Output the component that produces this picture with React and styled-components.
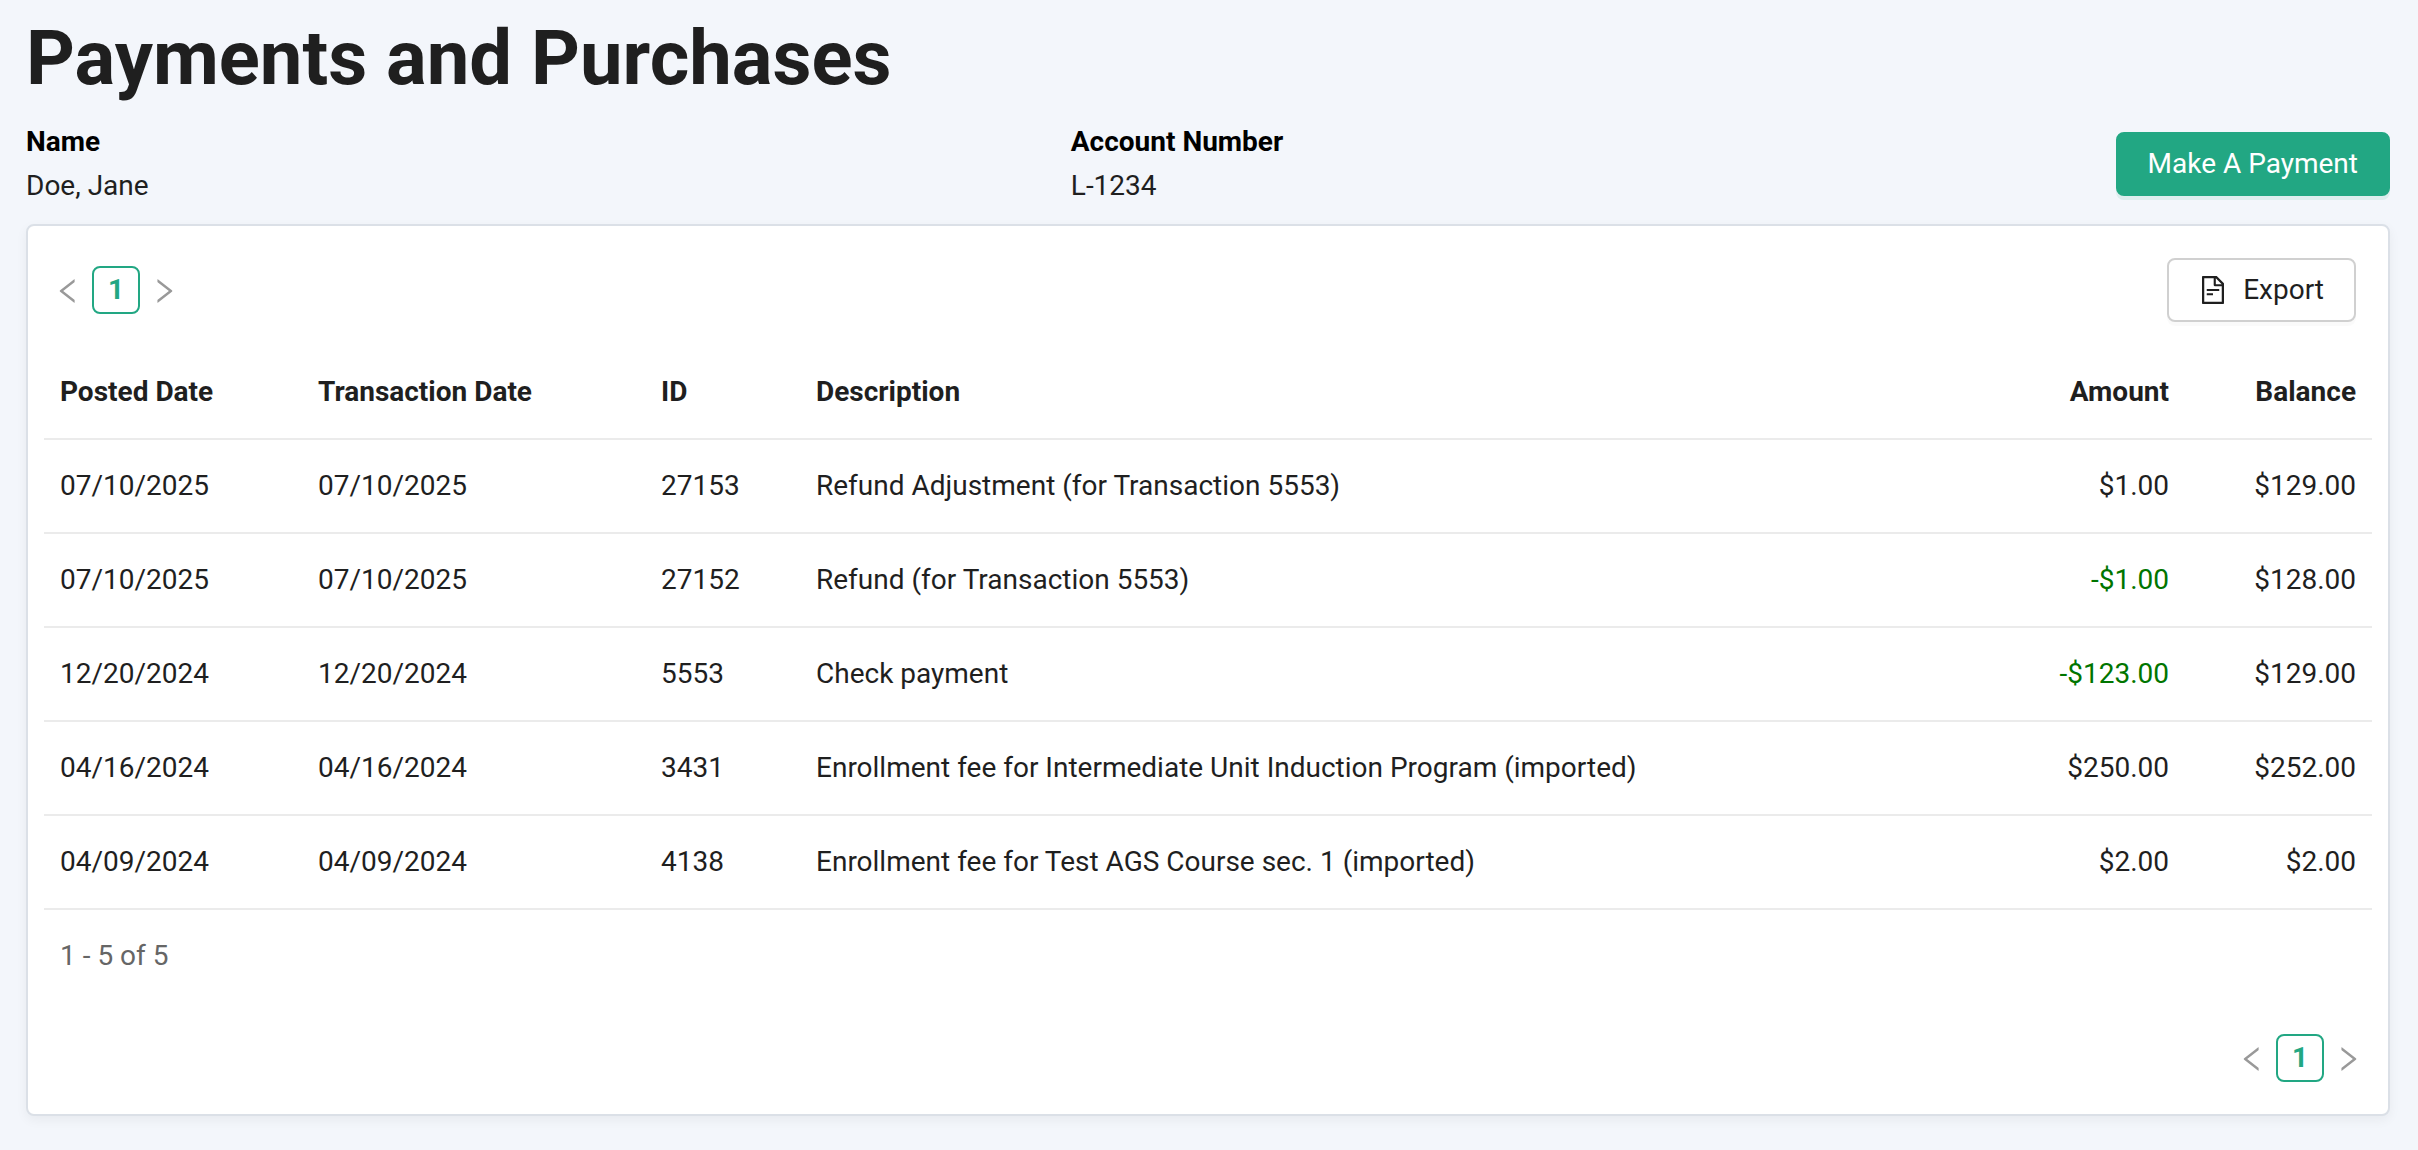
import React, { useState } from 'react'
import styled, { createGlobalStyle } from 'styled-components'

const transactions = [
  { posted: '07/10/2025', date: '07/10/2025', id: '27153', description: 'Refund Adjustment (for Transaction 5553)', amount: 1, balance: 129 },
  { posted: '07/10/2025', date: '07/10/2025', id: '27152', description: 'Refund (for Transaction 5553)', amount: -1, balance: 128 },
  { posted: '12/20/2024', date: '12/20/2024', id: '5553', description: 'Check payment', amount: -123, balance: 129 },
  { posted: '04/16/2024', date: '04/16/2024', id: '3431', description: 'Enrollment fee for Intermediate Unit Induction Program (imported)', amount: 250, balance: 252 },
  { posted: '04/09/2024', date: '04/09/2024', id: '4138', description: 'Enrollment fee for Test AGS Course sec. 1 (imported)', amount: 2, balance: 2 },
]

const formatMoney = (value) => {
  const sign = value < 0 ? '-' : ''
  return `${sign}$${Math.abs(value).toFixed(2)}`
}

//ICONS
const LeftIcon = () => (
  <Icon viewBox="64 64 896 896" aria-hidden="true">
    <path d="M724 218.3V141c0-6.7-7.7-10.4-12.9-6.3L260.3 486.8a31.86 31.86 0 000 50.3l450.8 352.1c5.3 4.1 12.9.4 12.9-6.3v-77.3c0-4.9-2.3-9.6-6.1-12.6l-360-281 360-281.1c3.8-3 6.1-7.7 6.1-12.6z" />
  </Icon>
)

const RightIcon = () => (
  <Icon viewBox="64 64 896 896" aria-hidden="true">
    <path d="M765.7 486.8L314.9 134.7A7.97 7.97 0 00302 141v77.3c0 4.9 2.3 9.6 6.1 12.6l360 281.1-360 281.1c-3.9 3-6.1 7.7-6.1 12.6V883c0 6.7 7.7 10.4 12.9 6.3l450.8-352.1a31.96 31.96 0 000-50.4z" />
  </Icon>
)

const FileIcon = () => (
  <Icon viewBox="64 64 896 896" aria-hidden="true">
    <path d="M854.6 288.6L639.4 73.4c-6-6-14.1-9.4-22.6-9.4H192c-17.7 0-32 14.3-32 32v832c0 17.7 14.3 32 32 32h640c17.7 0 32-14.3 32-32V311.3c0-8.5-3.4-16.7-9.4-22.7zM790.2 326H602V137.8L790.2 326zm1.8 562H232V136h302v216a42 42 0 0042 42h216v494zM504 618H320c-4.4 0-8 3.6-8 8v48c0 4.4 3.6 8 8 8h184c4.4 0 8-3.6 8-8v-48c0-4.4-3.6-8-8-8zM312 490v48c0 4.4 3.6 8 8 8h384c4.4 0 8-3.6 8-8v-48c0-4.4-3.6-8-8-8H320c-4.4 0-8 3.6-8 8z" />
  </Icon>
)

const Pagination = ({ page, onChange, label }) => (
  <Pager aria-label={label}>
    <PageArrow type="button" aria-label="Previous page" disabled>
      <LeftIcon />
    </PageArrow>
    <PageNumber type="button" aria-current="page" onClick={() => onChange(1)}>{page}</PageNumber>
    <PageArrow type="button" aria-label="Next page" disabled>
      <RightIcon />
    </PageArrow>
  </Pager>
)

const App = () => {
  const [page, setPage] = useState(1)

  return (
    <>
      <GlobalStyle />
      <Page>
        <Title>Payments and Purchases</Title>
        <Summary>
          <Fields>
            <Field>
              <dt>Name</dt>
              <dd>Doe, Jane</dd>
            </Field>
            <Field>
              <dt>Account Number</dt>
              <dd>L-1234</dd>
            </Field>
          </Fields>
          <Button type="button" $primary>Make A Payment</Button>
        </Summary>

        <Card>
          <Toolbar>
            <Pagination page={page} onChange={setPage} label="Transactions pages, top" />
            <ToolbarActions>
              <Button type="button">
                <FileIcon />
                Export
              </Button>
            </ToolbarActions>
          </Toolbar>

          <Table>
            <thead>
              <tr>
                <HeadCell scope="col" $width="258px">Posted Date</HeadCell>
                <HeadCell scope="col" $width="343px">Transaction Date</HeadCell>
                <HeadCell scope="col" $width="155px">ID</HeadCell>
                <HeadCell scope="col">Description</HeadCell>
                <HeadCell scope="col" $width="180px" $align="right">Amount</HeadCell>
                <HeadCell scope="col" $width="187px" $align="right">Balance</HeadCell>
              </tr>
            </thead>
            <tbody>
              {transactions.map((item) => (
                <tr key={item.id}>
                  <Cell>{item.posted}</Cell>
                  <Cell>{item.date}</Cell>
                  <Cell>{item.id}</Cell>
                  <Cell>{item.description}</Cell>
                  <Cell $align="right" $credit={item.amount < 0}>{formatMoney(item.amount)}</Cell>
                  <Cell $align="right">{formatMoney(item.balance)}</Cell>
                </tr>
              ))}
            </tbody>
          </Table>
          <Count>1 - {transactions.length} of {transactions.length}</Count>

          <BottomBar>
            <Pagination page={page} onChange={setPage} label="Transactions pages, bottom" />
          </BottomBar>
        </Card>
      </Page>
    </>
  )
}

const GlobalStyle = createGlobalStyle`
  *, *::before, *::after{
    box-sizing: border-box;
  }
  body{
    margin: 0;
    background-color: #f3f6fb;
    color: #1f1f1f;
    font-family: Roboto, "Liberation Sans", sans-serif;
    font-size: 28px;
    line-height: 44px;
  }
`

const Page = styled.main`
  padding: 12px 28px 34px 26px;
`

const Title = styled.h1`
  margin: 0 0 16px;
  font-size: 76px;
  font-weight: 700;
  line-height: 92px;
`

const Summary = styled.section`
  display: flex;
  align-items: center;
  margin-bottom: 16px;
`

const Fields = styled.dl`
  display: flex;
  flex: 1;
  margin: 0;
`

const Field = styled.div`
  flex: 1;

  dt{
    color: #000;
    font-weight: 700;
  }
  dd{
    margin: 0;
  }
`

const Icon = styled.svg`
  display: block;
  width: 28px;
  height: 28px;
  fill: currentColor;
`

const Button = styled.button`
  display: inline-flex;
  align-items: center;
  gap: 16px;
  height: 64px;
  padding: 0 30px;
  border: 2px solid ${({ $primary }) => ($primary ? '#22a783' : '#d0d0d0')};
  border-radius: 8px;
  background-color: ${({ $primary }) => ($primary ? '#22a783' : '#fff')};
  box-shadow: 0 4px 0 ${({ $primary }) => ($primary ? 'rgba(34, 167, 131, 0.1)' : 'rgba(0, 0, 0, 0.02)')};
  color: ${({ $primary }) => ($primary ? '#fff' : '#1f1f1f')};
  font: inherit;
  white-space: nowrap;
  cursor: pointer;
`

const Card = styled.section`
  padding: 32px 16px;
  border: 2px solid #dbe0e7;
  border-radius: 8px;
  background-color: #fff;
  box-shadow: 0 4px 12px rgba(0, 0, 0, 0.05);
`

const Toolbar = styled.div`
  display: flex;
  align-items: center;
  justify-content: space-between;
  margin-bottom: 24px;
`

const ToolbarActions = styled.div`
  display: flex;
  padding-right: 16px;
`

const BottomBar = styled.div`
  display: flex;
  justify-content: flex-end;
  margin-top: 32px;
`

const Pager = styled.nav`
  display: flex;
  align-items: center;
`

const PageArrow = styled.button`
  display: flex;
  align-items: center;
  justify-content: center;
  width: 48px;
  height: 48px;
  padding: 2px 0 0;
  border: none;
  background: none;
  color: #999;
`

const PageNumber = styled.button`
  width: 48px;
  height: 48px;
  padding: 0;
  border: 2px solid #22a783;
  border-radius: 8px;
  background-color: #fff;
  color: #22a783;
  font: inherit;
  font-weight: 700;
  cursor: pointer;
`

const Table = styled.table`
  width: 100%;
  border-collapse: separate;
  border-spacing: 0;
  table-layout: fixed;
`

const Cell = styled.td`
  padding: 24px 16px;
  border-bottom: 2px solid #ebebeb;
  color: ${({ $credit }) => ($credit ? '#007500' : 'inherit')};
  text-align: ${({ $align }) => $align || 'left'};
`

const HeadCell = styled.th`
  width: ${({ $width }) => $width || 'auto'};
  padding: 24px 16px;
  border-bottom: 2px solid #ebebeb;
  font-weight: 700;
  text-align: ${({ $align }) => $align || 'left'};
`

const Count = styled.div`
  padding: 24px 16px;
  color: #666;
`

export default App
